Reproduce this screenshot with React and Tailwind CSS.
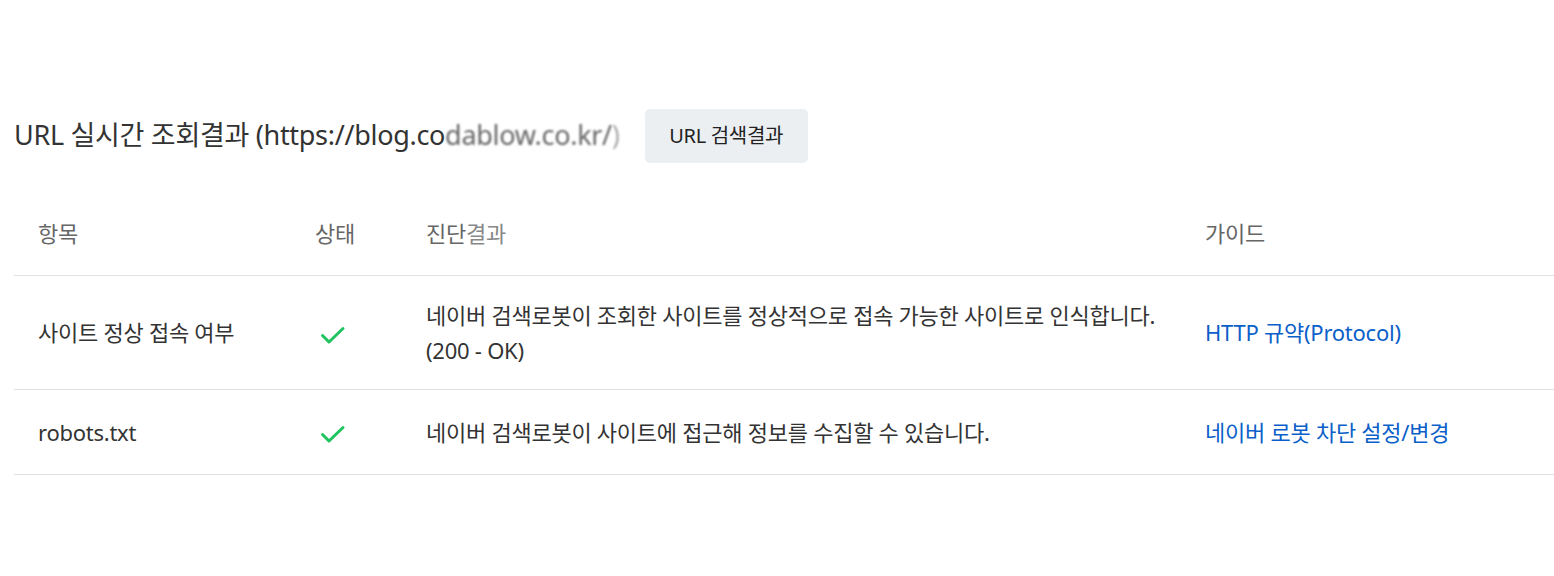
import React from "react";

const Check = () => (
  <svg width="30" height="24" viewBox="0 0 30 24" fill="none">
    <path d="M5.5 12.5 L12 19 L26 5.5" stroke="#1fc45f" strokeWidth="3" strokeLinecap="round" strokeLinejoin="round" />
  </svg>
);

const rows = [
  {
    item: "사이트 정상 접속 여부",
    result: ["네이버 검색로봇이 조회한 사이트를 정상적으로 접속 가능한 사이트로 인식합니다.", "(200 - OK)"],
    guide: "HTTP 규약(Protocol)",
    h: "h-[114px]",
  },
  {
    item: "robots.txt",
    result: ["네이버 검색로봇이 사이트에 접근해 정보를 수집할 수 있습니다."],
    guide: "네이버 로봇 차단 설정/변경",
    h: "h-[85px]",
  },
];

export default function App() {
  return (
    <div
      className="w-[1554px] h-[576px] bg-white pl-[14px] pt-[109px] text-[#333]"
      style={{ fontFamily: '"Noto Sans", "Noto Sans CJK KR", sans-serif' }}
    >
      <div className="flex items-center h-[54px]">
        <h2 className="text-[27px] font-normal text-[#333] tracking-[-0.3px] leading-none -mt-[3px]">
          URL 실시간 조회결과 (https://blog.co
          <span className="text-[#666] blur-[1.2px]">dablow.co.kr/</span>
          <span className="text-[#aaa] blur-[1px]">)</span>
        </h2>
        <button className="ml-[25px] h-[54px] w-[163px] rounded-[5px] bg-[#eceff2] text-[20px] text-[#222] tracking-[-0.3px]">
          URL 검색결과
        </button>
      </div>

      <div className="mt-[36px]">
        <div className="grid grid-cols-[277px_111px_779px_1fr] h-[77px] items-center border-b border-[#e2e2e2] text-[22px] text-[#666] tracking-[-0.25px]">
          <div className="pl-[24px] -mt-[8px]">항목</div>
          <div className="pl-[24px] -mt-[8px]">상태</div>
          <div className="pl-[24px] -mt-[8px]">
            진단<span className="text-[#888]">결과</span>
          </div>
          <div className="pl-[24px] -mt-[8px]">가이드</div>
        </div>
        {rows.map((r, i) => (
          <div
            key={i}
            className={`grid grid-cols-[277px_111px_779px_1fr] ${r.h} items-center border-b border-[#e2e2e2] text-[22px] tracking-[-0.25px]`}
          >
            <div className="pl-[24px] text-[#333]">{r.item}</div>
            <div className="pl-[26px] pt-[4px]">
              <Check />
            </div>
            <div className="pl-[24px] leading-[35px] text-[#333]">
              {r.result.map((l, j) => (
                <div key={j}>{l}</div>
              ))}
            </div>
            <div className="pl-[24px] text-[#0b5fc9]">{r.guide}</div>
          </div>
        ))}
      </div>
    </div>
  );
}
